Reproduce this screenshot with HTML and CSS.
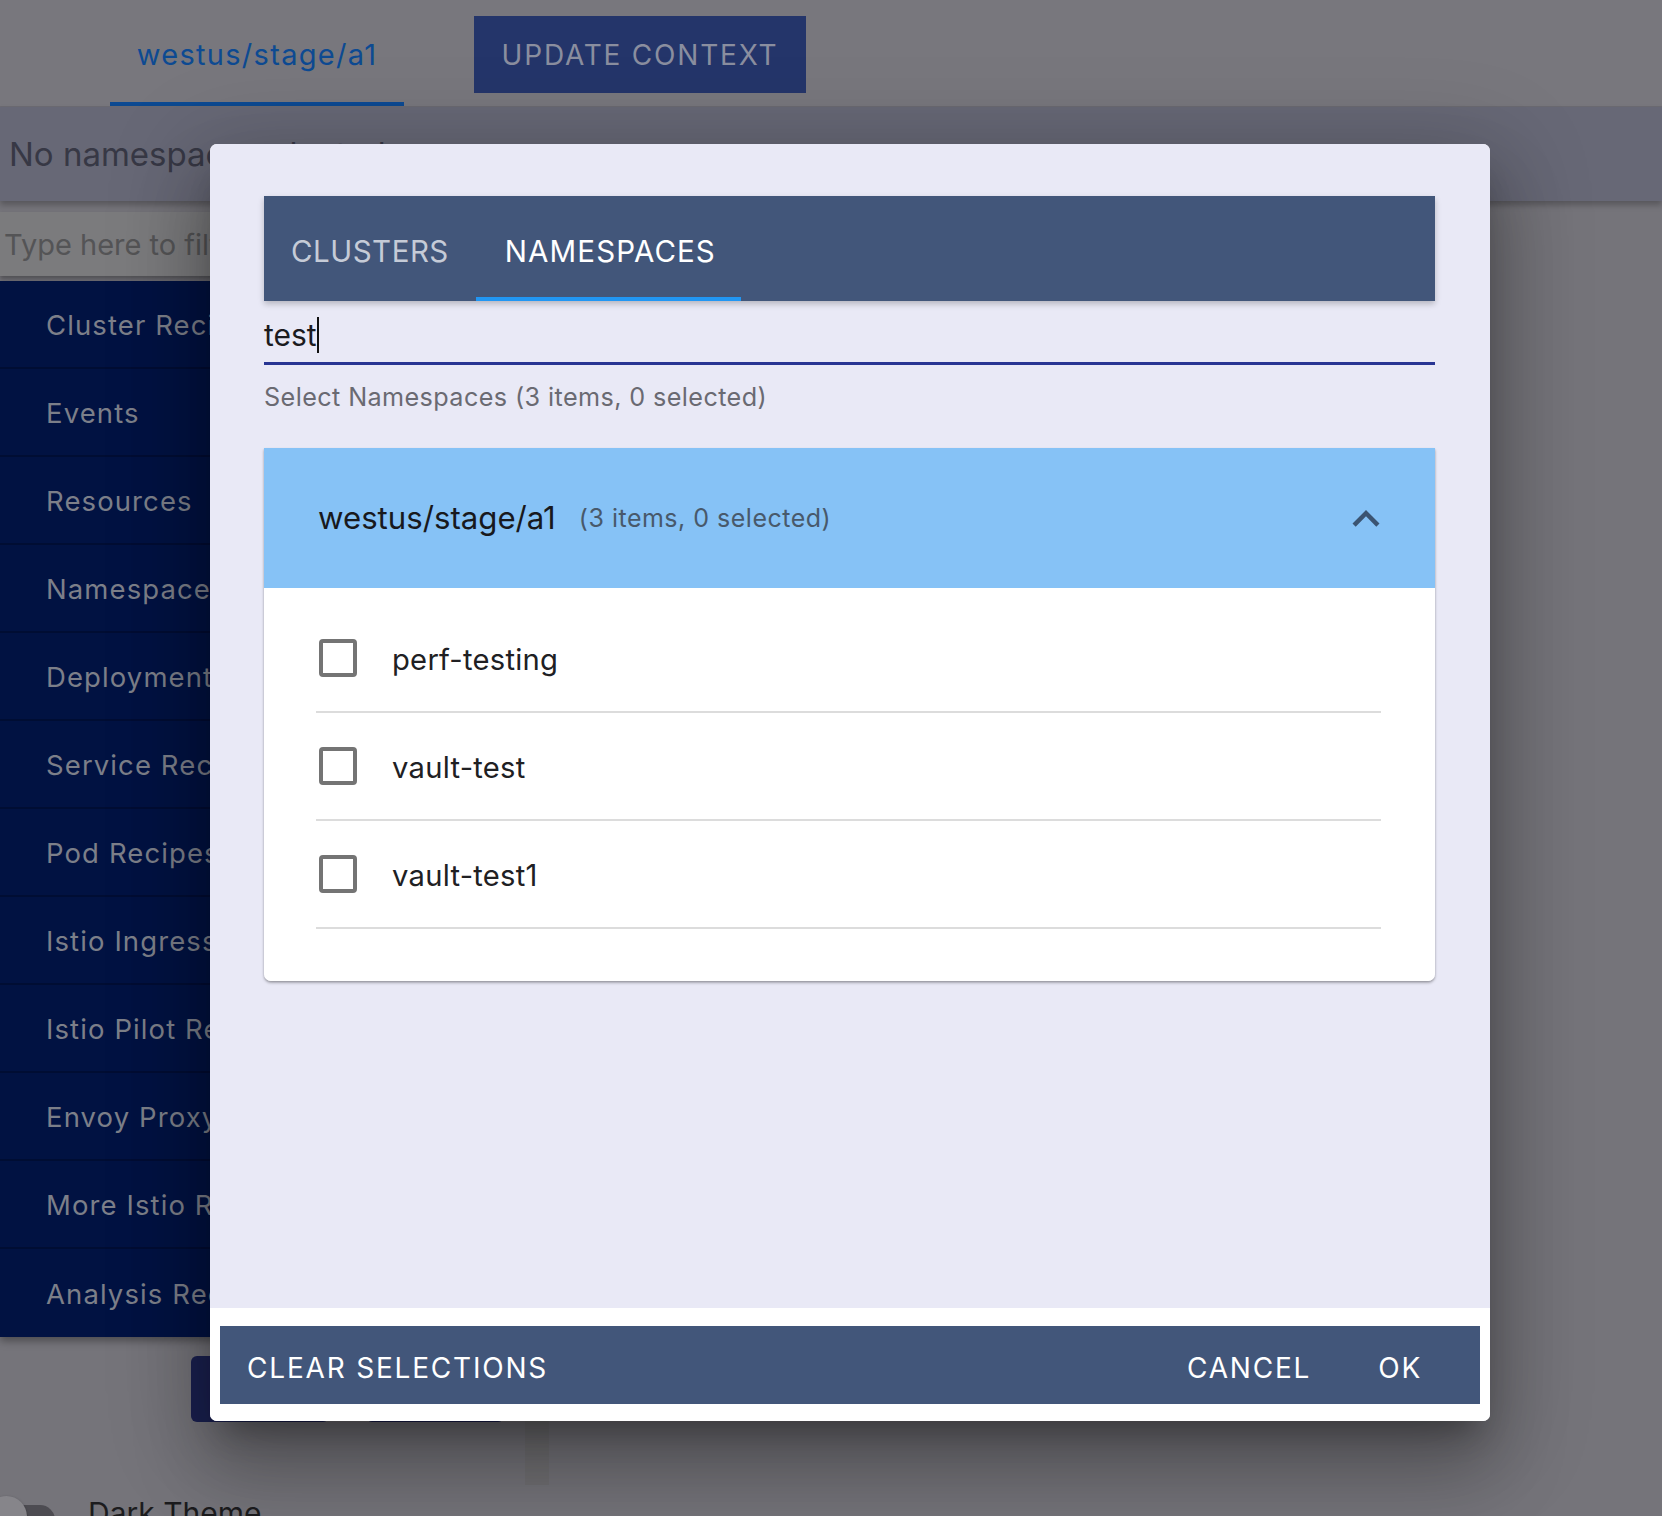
FILE: index.html
```html
<!DOCTYPE html>
<html lang="en">
<head>
<meta charset="utf-8">
<title>Context</title>
<link rel="stylesheet" href="styles.css">
</head>
<body>
<div class="app">
  <header class="topbar">
    <div class="ctx-tab">westus/stage/a1</div>
    <button class="update-btn">UPDATE CONTEXT</button>
  </header>
  <div class="ns-bar">No namespace selected</div>
  <div class="filter-wrap"><div class="filter">Type here to filter</div></div>
  <nav class="sidebar">
    <div class="side-item">Cluster Recipes</div>
    <div class="side-item">Events</div>
    <div class="side-item">Resources</div>
    <div class="side-item">Namespaces</div>
    <div class="side-item">Deployments</div>
    <div class="side-item">Service Recipes</div>
    <div class="side-item">Pod Recipes</div>
    <div class="side-item">Istio Ingress</div>
    <div class="side-item">Istio Pilot Recipes</div>
    <div class="side-item">Envoy Proxy</div>
    <div class="side-item">More Istio Recipes</div>
    <div class="side-item">Analysis Recipes</div>
  </nav>
  <div class="lower">
    <div class="lower-left">
      <div class="side-actions">
        <button class="side-btn" aria-label="Run"></button>
        <button class="side-btn" aria-label="Clear"></button>
      </div>
      <div class="theme-row">
        <div class="toggle"><span class="toggle-knob"></span></div>
        <span class="theme-label">Dark Theme</span>
      </div>
    </div>
    <div class="scroll-stub"></div>
  </div>
</div>

<div class="dialog">
  <div class="dialog-body">
    <div class="tabs">
      <div class="tab">CLUSTERS</div>
      <div class="tab active">NAMESPACES</div>
    </div>
    <div class="search">
      <span class="search-text">test</span><span class="caret"></span>
    </div>
    <div class="helper">Select Namespaces (3 items, 0 selected)</div>
    <div class="panel">
      <div class="panel-head">
        <span class="panel-title">westus/stage/a1</span>
        <span class="panel-sub">(3 items, 0 selected)</span>
        <svg class="chevron" viewBox="0 0 24 24" width="54" height="54" aria-hidden="true">
          <path d="M12 8l-6 6 1.41 1.41L12 10.83l4.59 4.58L18 14z" fill="#3b5472"/>
        </svg>
      </div>
      <div class="panel-body">
        <div class="row"><span class="check"></span><span class="row-label">perf-testing</span></div>
        <div class="row"><span class="check"></span><span class="row-label">vault-test</span></div>
        <div class="row"><span class="check"></span><span class="row-label">vault-test1</span></div>
      </div>
    </div>
  </div>
  <div class="dialog-actions">
    <div class="action-bar">
      <button class="act-btn">CLEAR SELECTIONS</button>
      <span class="spacer"></span>
      <button class="act-btn">CANCEL</button>
      <button class="act-btn">OK</button>
    </div>
  </div>
</div>
</body>
</html>
```

FILE: styles.css
```css
* { box-sizing: border-box; }
html, body { margin: 0; padding: 0; }
body {
  width: 1662px;
  height: 1516px;
  overflow: hidden;
  background: #75747a;
  font-family: "Inter", "Liberation Sans", sans-serif;
  position: relative;
}
button { font-family: inherit; border: 0; cursor: pointer; }

.app { display: flex; flex-direction: column; }

.topbar {
  height: 107px;
  background: #78777d;
  display: flex;
  align-items: center;
  padding-left: 110px;
  border-bottom: 1px solid #6c6b72;
}
.ctx-tab {
  width: 294px;
  height: 106px;
  display: flex;
  align-items: center;
  justify-content: center;
  color: #0d4a92;
  font-size: 29px;
  letter-spacing: 1.3px;
  border-bottom: 4px solid #0d4a92;
  padding-top: 6px;
}
.update-btn {
  margin-left: 70px;
  width: 332px;
  height: 77px;
  background: #24356a;
  color: #8a8e9f;
  font-size: 28px;
  letter-spacing: 1.8px;
  margin-top: 2px;
  padding-top: 3px;
}

.ns-bar {
  height: 94px;
  background: #676876;
  color: #373845;
  font-size: 33px;
  display: flex;
  align-items: center;
  padding-left: 9px;
  box-shadow: 0 4px 6px rgba(0,0,0,0.25);
  position: relative;
}

.filter-wrap { padding-top: 11px; padding-bottom: 5px; }
.filter {
  height: 64px;
  width: 520px;
  background: #7b7b7d;
  color: #545456;
  font-size: 29px;
  display: flex;
  align-items: center;
  padding-left: 4px;
  box-shadow: 0 3px 4px rgba(0,0,0,0.3);
}

.sidebar {
  width: 520px;
  background: #011242;
  box-shadow: 0 4px 8px rgba(0,0,0,0.35);
}
.side-item {
  height: 88px;
  display: flex;
  align-items: center;
  padding-left: 46px;
  padding-top: 2px;
  color: #7c7f89;
  font-size: 27.5px;
  letter-spacing: 1.1px;
  border-bottom: 2px solid #000d33;
  white-space: nowrap;
}
.side-item:last-child { border-bottom: 0; }

.lower { display: flex; }
.lower-left { width: 525px; }
.side-actions {
  display: flex;
  gap: 37px;
  padding: 19px 0 0 191px;
}
.side-btn {
  width: 138px;
  height: 66px;
  border-radius: 6px;
  background: #1b2151;
}
.theme-row {
  display: flex;
  align-items: flex-start;
  margin-top: 72px;
  gap: 33px;
}
.toggle {
  width: 55px;
  height: 30px;
  margin-top: 11px;
  border-radius: 15px;
  background: #4d4c52;
  position: relative;
}
.toggle-knob {
  position: absolute;
  left: -14px;
  top: -9px;
  width: 41px;
  height: 41px;
  border-radius: 50%;
  background: #86858a;
  box-shadow: 0 1px 3px rgba(0,0,0,0.3);
}
.theme-label {
  color: #1c1c1e;
  font-size: 30px;
  line-height: 36px;
  margin-top: 1px;
}
.scroll-stub {
  width: 24px;
  height: 64px;
  margin-top: 84px;
  background: #717073;
}

/* Dialog (overlay) */
.dialog {
  position: absolute;
  left: 210px;
  top: 144px;
  width: 1280px;
  height: 1277px;
  border-radius: 7px;
  overflow: hidden;
  background: #fff;
  display: flex;
  flex-direction: column;
  box-shadow: 0 22px 30px -14px rgba(0,0,0,0.3), 0 48px 76px 6px rgba(0,0,0,0.2), 0 18px 92px 16px rgba(0,0,0,0.18);
}
.dialog-body {
  flex: 1;
  background: #e9e9f6;
  padding: 52px 55px 0 54px;
}
.tabs {
  height: 105px;
  background: #42567a;
  display: flex;
  align-items: stretch;
  box-shadow: 0 3px 6px rgba(0,0,0,0.22);
}
.tab {
  display: flex;
  align-items: center;
  padding: 9px 27px 0;
  color: #c5cbd7;
  font-size: 29.5px;
  letter-spacing: 0.5px;
  border-bottom: 4px solid transparent;
}
.tab.active {
  color: #ffffff;
  border-bottom-color: #2196f3;
  padding: 9px 25px 0 29px;
  letter-spacing: 1.1px;
}

.search {
  height: 64px;
  padding-top: 14px;
  border-bottom: 3px solid #283593;
  display: flex;
  align-items: flex-start;
}
.search-text {
  font-size: 30px;
  line-height: 40px;
  color: #1b1b1f;
}
.caret {
  width: 2px;
  height: 36px;
  margin-top: 2px;
  background: #111;
}
.helper {
  margin-top: 16px;
  font-size: 25.2px;
  line-height: 32px;
  color: #6a6a72;
  letter-spacing: 0.4px;
}

.panel {
  margin-top: 35px;
  border-radius: 0 0 7px 7px;
  overflow: hidden;
  box-shadow: 0 2px 3px rgba(0,0,0,0.25), 0 1px 2px rgba(0,0,0,0.15);
}
.panel-head {
  height: 140px;
  background: #86c2f6;
  display: flex;
  align-items: center;
  padding: 0 42px 0 54px;
}
.panel-title {
  font-size: 31.2px;
  color: #18191d;
}
.panel-sub {
  margin-left: 23px;
  font-size: 25px;
  color: #48596b;
  letter-spacing: 0.5px;
}
.chevron { margin-left: auto; margin-top: 2px; }

.panel-body {
  background: #fff;
  padding: 17px 54px 52px 52px;
}
.row {
  height: 108px;
  display: flex;
  align-items: center;
  border-bottom: 2px solid #dcdcdc;
}
.check {
  width: 38px;
  height: 38px;
  margin-left: 3px;
  border: 4px solid #747474;
  border-radius: 4px;
}
.row-label {
  margin-left: 35px;
  font-size: 29.2px;
  color: #202023;
  letter-spacing: 0.25px;
  padding-top: 3px;
}

.dialog-actions {
  background: #fff;
  padding: 18px 10px 17px;
}
.action-bar {
  height: 78px;
  background: #42567a;
  display: flex;
  align-items: stretch;
  padding-right: 31px;
}
.spacer { flex: 1; }
.act-btn {
  background: transparent;
  color: #ffffff;
  font-size: 28px;
  letter-spacing: 1.8px;
  padding: 6px 27px 0;
}
.act-btn + .act-btn { margin-left: 13px; }
```
